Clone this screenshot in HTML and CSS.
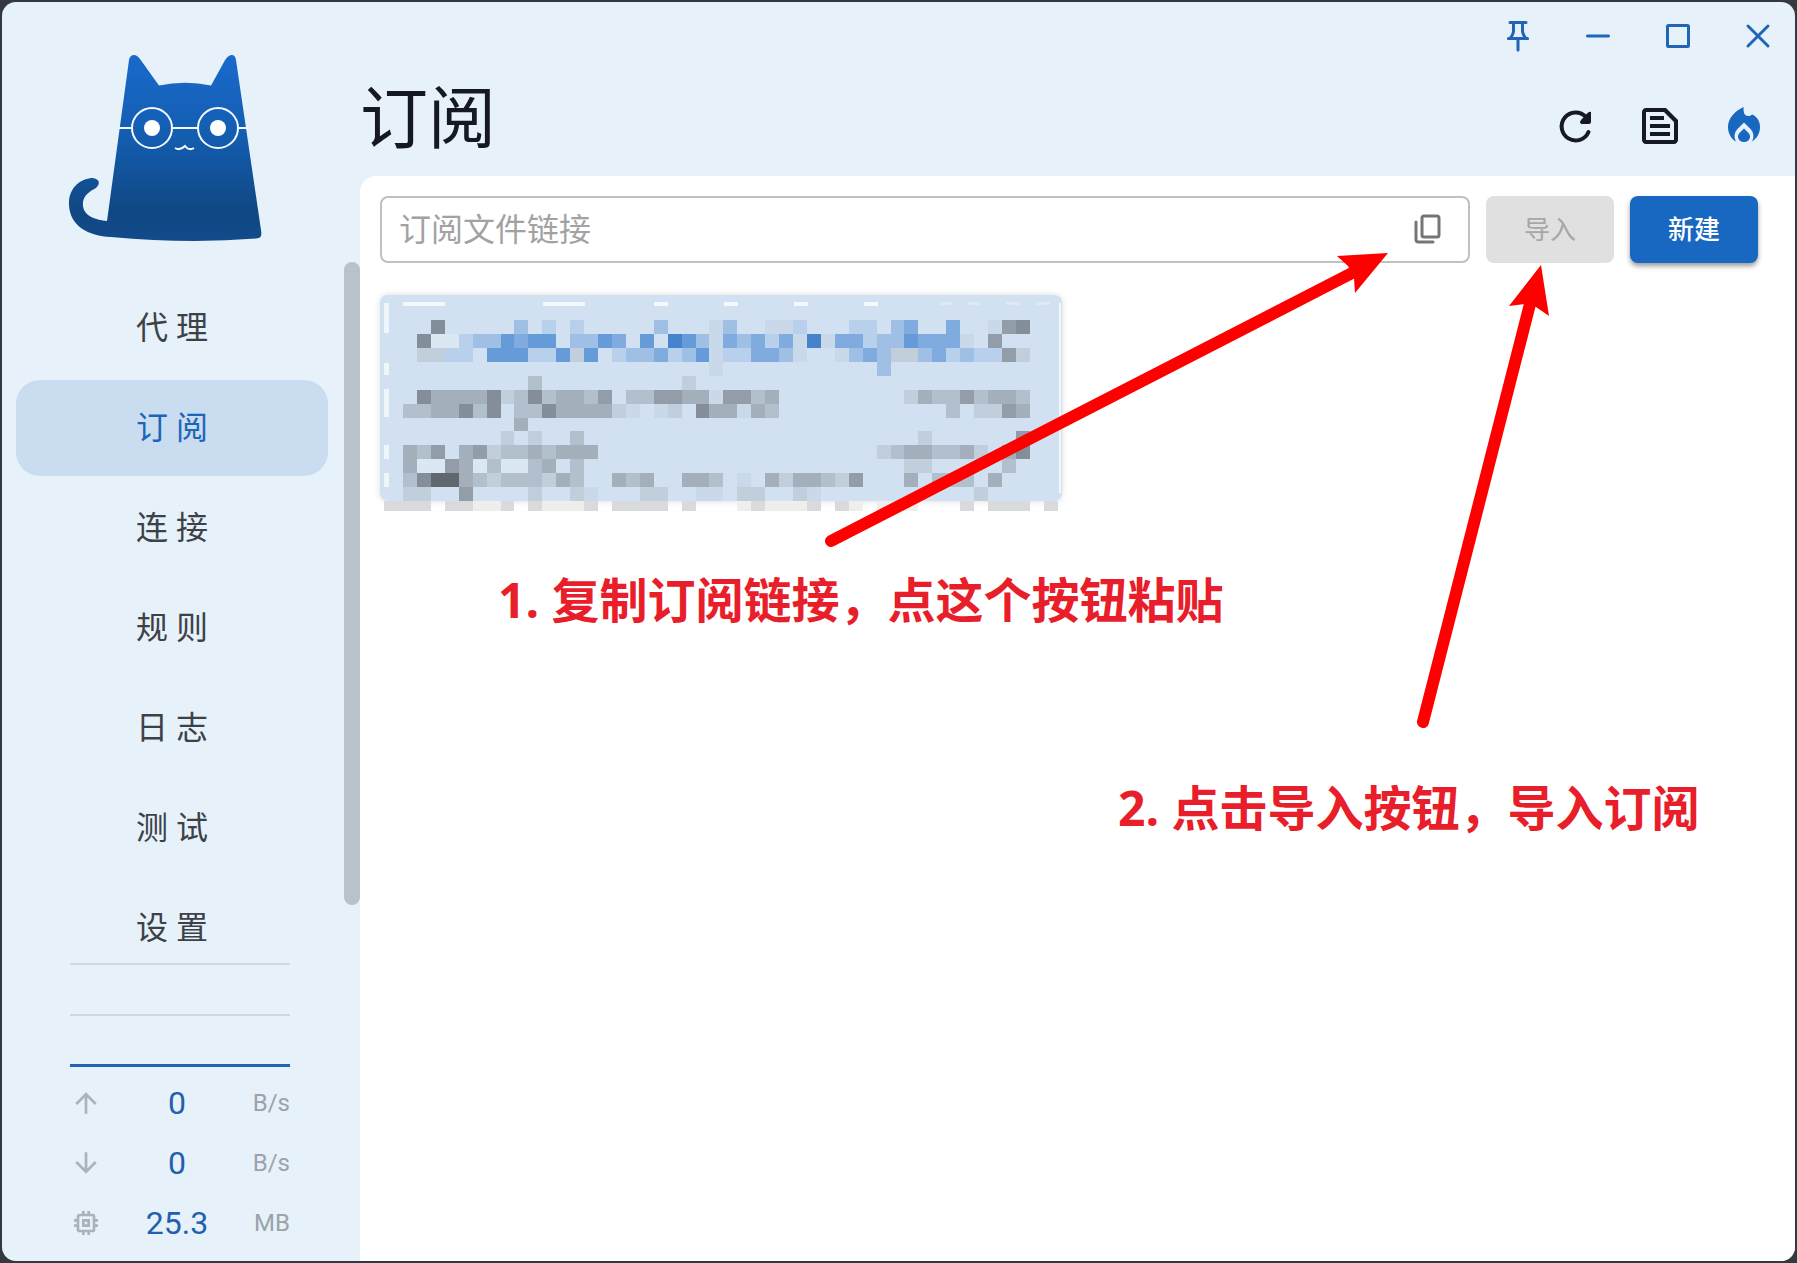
FILE: index.html
```
<!DOCTYPE html>
<html lang="zh-CN">
<head>
    <meta charset="UTF-8">
    <meta name="viewport" content="width=device-width, initial-scale=1.0">
    <title>订阅</title>
    <link rel="stylesheet" href="styles.css">
</head>
<body>
    <div class="window">
        <aside class="sidebar">
            <svg class="logo" viewBox="0 0 194 188" aria-hidden="true">
                <defs>
                    <linearGradient id="cat" x1="0" y1="0" x2="0" y2="1">
                        <stop offset="0" stop-color="#1a69cc"/>
                        <stop offset="0.4" stop-color="#145fb3"/>
                        <stop offset="0.85" stop-color="#104783"/>
                        <stop offset="1" stop-color="#124a8b"/>
                    </linearGradient>
                </defs>
                <path fill="url(#cat)" d="M61 6C62 0 68 -1 72 5C78 13 84 22 91 31.500Q117 26 143 31.500L156 8C160 0 167 -2 168 6L193 176C194 182 193 184 188 184.500Q120 190 43 183C20 182 2 172 1 151C0 133 14 124 25 124C31 125 33 129 28 134C20 138 14 143 15 152C16 162 28 166 39 167Z"/>
                <g fill="none" stroke="#f4fbff" stroke-width="2">
                    <circle cx="84" cy="74" r="20"/>
                    <circle cx="150" cy="74" r="20"/>
                    <path d="M50 74H64M104 74H130M170 74H181M107 94Q112 97 117 92Q121 97 126 94"/>
                </g>
                <g fill="#fff">
                    <circle cx="84" cy="74" r="8"/>
                    <circle cx="150" cy="74" r="8"/>
                </g>
            </svg>

            <nav class="menu">
                <a class="menu-item" href="#proxies">代理</a>
                <a class="menu-item active" href="#profiles">订阅</a>
                <a class="menu-item" href="#connections">连接</a>
                <a class="menu-item" href="#rules">规则</a>
                <a class="menu-item" href="#logs">日志</a>
                <a class="menu-item" href="#test">测试</a>
                <a class="menu-item" href="#settings">设置</a>
                <span class="scroll-thumb"></span>
            </nav>

            <div class="traffic">
                <div class="graph">
                    <span class="graph-line"></span>
                    <span class="graph-line"></span>
                    <span class="graph-line current"></span>
                </div>
                <div class="traffic-row">
                    <svg viewBox="0 0 24 24"><path d="m4 12 1.410 1.410L11 7.830V20h2V7.830l5.580 5.590L20 12l-8-8z"/></svg>
                    <span class="value">0</span>
                    <span class="unit">B/s</span>
                </div>
                <div class="traffic-row">
                    <svg viewBox="0 0 24 24"><path d="m20 12-1.410-1.410L13 16.170V4h-2v12.170l-5.580-5.590L4 12l8 8z"/></svg>
                    <span class="value">0</span>
                    <span class="unit">B/s</span>
                </div>
                <div class="traffic-row">
                    <svg viewBox="0 0 24 24"><path d="M15 9H9v6h6zm-2 4h-2v-2h2zm8-2V9h-2V7c0-1.100-.9-2-2-2h-2V3h-2v2h-2V3H9v2H7c-1.100 0-2 .9-2 2v2H3v2h2v2H3v2h2v2c0 1.100.9 2 2 2h2v2h2v-2h2v2h2v-2h2c1.100 0 2-.9 2-2v-2h2v-2h-2v-2zm-4 6H7V7h10z"/></svg>
                    <span class="value">25.3</span>
                    <span class="unit">MB</span>
                </div>
            </div>
        </aside>

        <main class="main">
            <header class="header">
                <h1>订阅</h1>
                <div class="header-side">
                    <div class="window-controls">
                        <button type="button" aria-label="置顶"><svg viewBox="0 0 32 32"><path d="M8 2.500H24M11.500 3V11Q11.500 14 8 18.500H24Q20.500 14 20.500 11V3M6.500 18.500H25.500M16 19V30"/></svg></button>
                        <button type="button" aria-label="最小化"><svg viewBox="0 0 32 32"><path d="M5.500 16H26.500"/></svg></button>
                        <button type="button" aria-label="最大化"><svg viewBox="0 0 32 32"><rect x="5.500" y="5.500" width="21" height="21" rx="1"/></svg></button>
                        <button type="button" aria-label="关闭"><svg viewBox="0 0 32 32"><path d="M6 6L26 26M26 6L6 26"/></svg></button>
                    </div>
                    <div class="page-actions">
                        <button type="button" aria-label="更新"><svg viewBox="0 0 48 48"><path fill="none" stroke="currentColor" stroke-width="4" stroke-linecap="round" d="M36.500 30A14 14 0 1 1 34 15"/><path d="M39 10V19.500Q39 22 36.500 22H30Q26.500 21 29 18L35.500 11Q38 9 39 10Z"/></svg></button>
                        <button type="button" aria-label="查看配置"><svg viewBox="0 0 24 24"><path d="M15 3H5c-1.100 0-2 .9-2 2v14c0 1.100.9 2 2 2h14c1.100 0 2-.9 2-2V9zm4 16H5V5h9l5 5zM7 7h7v2H7zm0 4h10v2H7zm0 4h10v2H7z"/></svg></button>
                        <button type="button" class="fire" aria-label="激活订阅"><svg viewBox="0 0 48 48"><path d="M23.500 5C15 9 8 16 8 25C8 31 11 37 16 39.500C14 36 14 31 17 27.500L24 20.500L31 27.500C34 31 34 36 32 39.500C37 36.500 40 31 40 25C40 19 37 14.500 32 12.500C29.500 15 25 14.500 24 11C23.500 9 23.500 7 23.500 5Z"/><path d="M24 26.500L19.500 31C16 35 19 40 24 40S32 35 28.500 31Z"/></svg></button>
                    </div>
                </div>
            </header>

            <section class="content">
                <form class="import-bar">
                    <div class="url-field">
                        <input type="text" aria-label="订阅文件链接" placeholder="订阅文件链接">
                        <button type="button" aria-label="粘贴"><svg viewBox="0 0 32 32"><rect x="10" y="2" width="17" height="21" rx="2"/><path d="M4 8V25.500Q4 28 6.500 28H21"/></svg></button>
                    </div>
                    <button type="button" class="btn" disabled>导入</button>
                    <button type="button" class="btn btn-primary">新建</button>
                </form>

                <article class="profile-card">
                    <svg id="mosaic" viewBox="0 0 682 216" aria-hidden="true"></svg>
                </article>
            </section>
        </main>

        <svg class="arrows" aria-hidden="true">
            <path d="M831 541L1354 272" stroke="#fe0000" stroke-width="12" stroke-linecap="round"/>
            <path d="M1388 253L1337 256L1348 266L1354 278L1355 293Z" fill="#fe0000"/>
            <path d="M1423 722L1530 304" stroke="#fe0000" stroke-width="12" stroke-linecap="round"/>
            <path d="M1541 265L1509 306L1525 304L1536 307L1549 316Z" fill="#fe0000"/>
        </svg>
        <p class="note note-paste">1. 复制订阅链接，点这个按钮粘贴</p>
        <p class="note note-import">2. 点击导入按钮，导入订阅</p>
    </div>

    <script src="mosaic.js"></script>
</body>
</html>
```
FILE: styles.css
```
* {
    box-sizing: border-box;
}
body {
    height: 100vh;
    margin: 0;
    padding: 2px;
    background: #34393f;
    font-family: Roboto, 'Noto Sans CJK SC', sans-serif;
    color: #3c4148;
    overflow: hidden;
}
button {
    border: none;
    background: none;
    padding: 0;
    font-family: inherit;
    cursor: pointer;
}
.window {
    position: relative;
    display: flex;
    height: 100%;
    border-radius: 14px;
    background: #e6f1f9;
    overflow: hidden;
}

/* sidebar */
.sidebar {
    flex: 0 0 358px;
    display: flex;
    flex-direction: column;
}
.logo {
    flex: none;
    width: 194px;
    height: 188px;
    margin: 52px 0 20px 66px;
}
.menu {
    position: relative;
    flex: 1;
    min-height: 0;
    padding: 18px 32px 0 14px;
    overflow: hidden;
}
.menu-item {
    display: block;
    height: 96px;
    margin-bottom: 4px;
    border-radius: 24px;
    line-height: 96px;
    font-size: 32px;
    letter-spacing: 8px;
    text-indent: 8px;
    text-align: center;
    text-decoration: none;
    color: #3c4148;
}
.menu-item.active {
    background: #c9dcf0;
    color: #1c66b8;
}
.scroll-thumb {
    position: absolute;
    top: 0;
    right: 0;
    width: 16px;
    height: 643px;
    border-radius: 8px;
    background: #b9c2c8;
}
.traffic {
    flex: none;
    width: 220px;
    margin: 0 0 8px 68px;
}
.graph {
    display: flex;
    flex-direction: column;
    justify-content: space-between;
    height: 104px;
    margin-bottom: 6px;
}
.graph-line {
    height: 2px;
    background: #cfd8e0;
}
.graph-line.current {
    height: 3px;
    background: #2164b4;
}
.traffic-row {
    display: flex;
    align-items: center;
    height: 60px;
}
.traffic-row svg {
    width: 32px;
    height: 32px;
    fill: #a9b3bb;
}
.traffic-row .value {
    flex: 1;
    text-align: center;
    font-size: 32px;
    color: #235fae;
}
.traffic-row .unit {
    width: 38px;
    text-align: right;
    font-size: 24px;
    color: #9ba3aa;
}

/* main */
.main {
    flex: 1;
    display: flex;
    flex-direction: column;
    min-width: 0;
}
.header {
    display: flex;
    justify-content: space-between;
    height: 174px;
}
.header h1 {
    margin: 68px 0 0;
    font-size: 68px;
    font-weight: 400;
    line-height: 100px;
    color: #16191f;
}
.window-controls,
.page-actions {
    display: flex;
    justify-content: flex-end;
}
.window-controls {
    gap: 48px;
    padding: 18px 21px 0 0;
}
.window-controls svg {
    display: block;
    width: 32px;
    height: 32px;
    fill: none;
    stroke: #1f65b8;
    stroke-width: 3;
    stroke-linecap: round;
}
.page-actions {
    gap: 36px;
    padding: 50px 27px 0 0;
}
.page-actions button {
    color: #16191f;
}
.page-actions svg {
    display: block;
    width: 48px;
    height: 48px;
    fill: currentColor;
}
.page-actions .fire {
    color: #1867c0;
}
.content {
    flex: 1;
    padding: 20px 37px 20px 20px;
    border-top-left-radius: 16px;
    background: #fff;
}
.import-bar {
    display: flex;
    gap: 16px;
    height: 67px;
}
.url-field {
    flex: 1;
    display: flex;
    align-items: center;
    padding: 0 24px 0 17px;
    border: 2px solid #c0c0c0;
    border-radius: 8px;
}
.url-field input {
    flex: 1;
    min-width: 0;
    height: 60px;
    padding: 0;
    border: none;
    outline: none;
    background: none;
    font-family: inherit;
    font-size: 32px;
}
.url-field input::placeholder {
    color: #a2a2a2;
}
.url-field svg {
    display: block;
    width: 32px;
    height: 32px;
    fill: none;
    stroke: #757575;
    stroke-width: 3;
    stroke-linecap: round;
}
.btn {
    width: 128px;
    padding-bottom: 4px;
    border-radius: 8px;
    font-size: 26px;
    background: #e0e0e0;
    color: #a6a6a6;
}
.btn-primary {
    background: #1867c0;
    color: #fff;
    font-weight: 500;
    box-shadow: 0 3px 5px rgba(0, 0, 0, 0.4);
}
.profile-card {
    width: 682px;
    height: 206px;
    margin-top: 32px;
    border-radius: 8px;
    background: #d1e1f2;
    box-shadow: 0 0 6px rgba(0, 0, 0, 0.15);
}
.profile-card svg {
    display: block;
    width: 682px;
    height: 216px;
    shape-rendering: crispEdges;
}

/* tutorial notes drawn over the window */
.arrows {
    position: absolute;
    top: -2px;
    left: -2px;
    width: 100%;
    height: 100%;
    pointer-events: none;
}
.note {
    position: absolute;
    margin: 0;
    font-family: 'Open Sans', 'Noto Sans CJK SC', sans-serif;
    font-size: 48px;
    font-weight: 700;
    line-height: 64px;
    white-space: nowrap;
    color: #e81e2a;
}
.note-paste {
    top: 566px;
    left: 496px;
}
.note-import {
    top: 774px;
    left: 1116px;
}
```
FILE: mosaic.js
```
// Pixelated profile card: one character per block
const colors = {
    0: '#c9d9ea', 1: '#c1cedb', 2: '#b2bfcc', 3: '#a3afbb', 4: '#929da9', 5: '#838e9a', 6: '#5f686f',
    a: '#b8d0ec', b: '#9fbfe5', c: '#7fabdf', d: '#659bd9', e: '#4583cb',
    w: '#dbe8f3', g: '#d8dadb', h: '#eeeeed'
};

const rows = [
    '..5.....b.a.a.....b...0b..00a...aa.bc..c..045..',
    '.5wwabbdcdd.bbdc.d.edb0cbcac0e0ccabbdccc0.4....',
    '.11aa.dddaad1d.abbcabd0aaccb0..0bcb11bcabaa41..',
    '......................0...........b............',
    '.........2..........1..........................',
    '.53333512523324.22443304423.........132242332..',
    '2233525.225333310.01.533032............2.1143..',
    '........3......................................',
    '.......1.1..2........................1......4..',
    '324.3412232333....................12332231.35..',
    '3ww43w2ww23.2.......................11.....2...',
    '2566321222132..323..332.0.3133214...3.222.3....',
    '11..4....1..10...11..00.11..10...........1.....',
    'gg.gghhg.ghhhg.gggg.g...hghhhg.gh.hhh...g.ggg.g'
];

const svg = document.getElementById('mosaic');
const size = 13.930;

function block(x, y, w, h, fill) {
    const rect = document.createElementNS('http://www.w3.org/2000/svg', 'rect');
    rect.setAttribute('x', x);
    rect.setAttribute('y', y);
    rect.setAttribute('width', w);
    rect.setAttribute('height', h);
    rect.setAttribute('fill', fill);
    svg.appendChild(rect);
}

rows.forEach((row, j) => {
    [...row].forEach((c, i) => {
        if (!colors[c]) return;
        const last = j === rows.length - 1;
        block(23 + i * size, 25 + j * size, size, last ? 10 : size, colors[c]);
    });
});
block(4, 206, 19, 10, colors.g);

// leftovers of the card's dashed border
[[23, 42], [163, 42], [274, 14], [344, 14], [414, 14], [484, 14]].forEach(([x, w]) => block(x, 7, w, 4, '#f2f8fb'));
[[560, 12], [588, 12], [626, 14], [656, 14]].forEach(([x, w]) => block(x, 7, w, 3, '#dde8f2'));
[[8, 30], [68, 12], [94, 28], [150, 14], [178, 14]].forEach(([y, h]) => block(4, y, 5, h, '#eef6fb'));
block(679, 8, 2, 190, '#f2f8fb');
```
